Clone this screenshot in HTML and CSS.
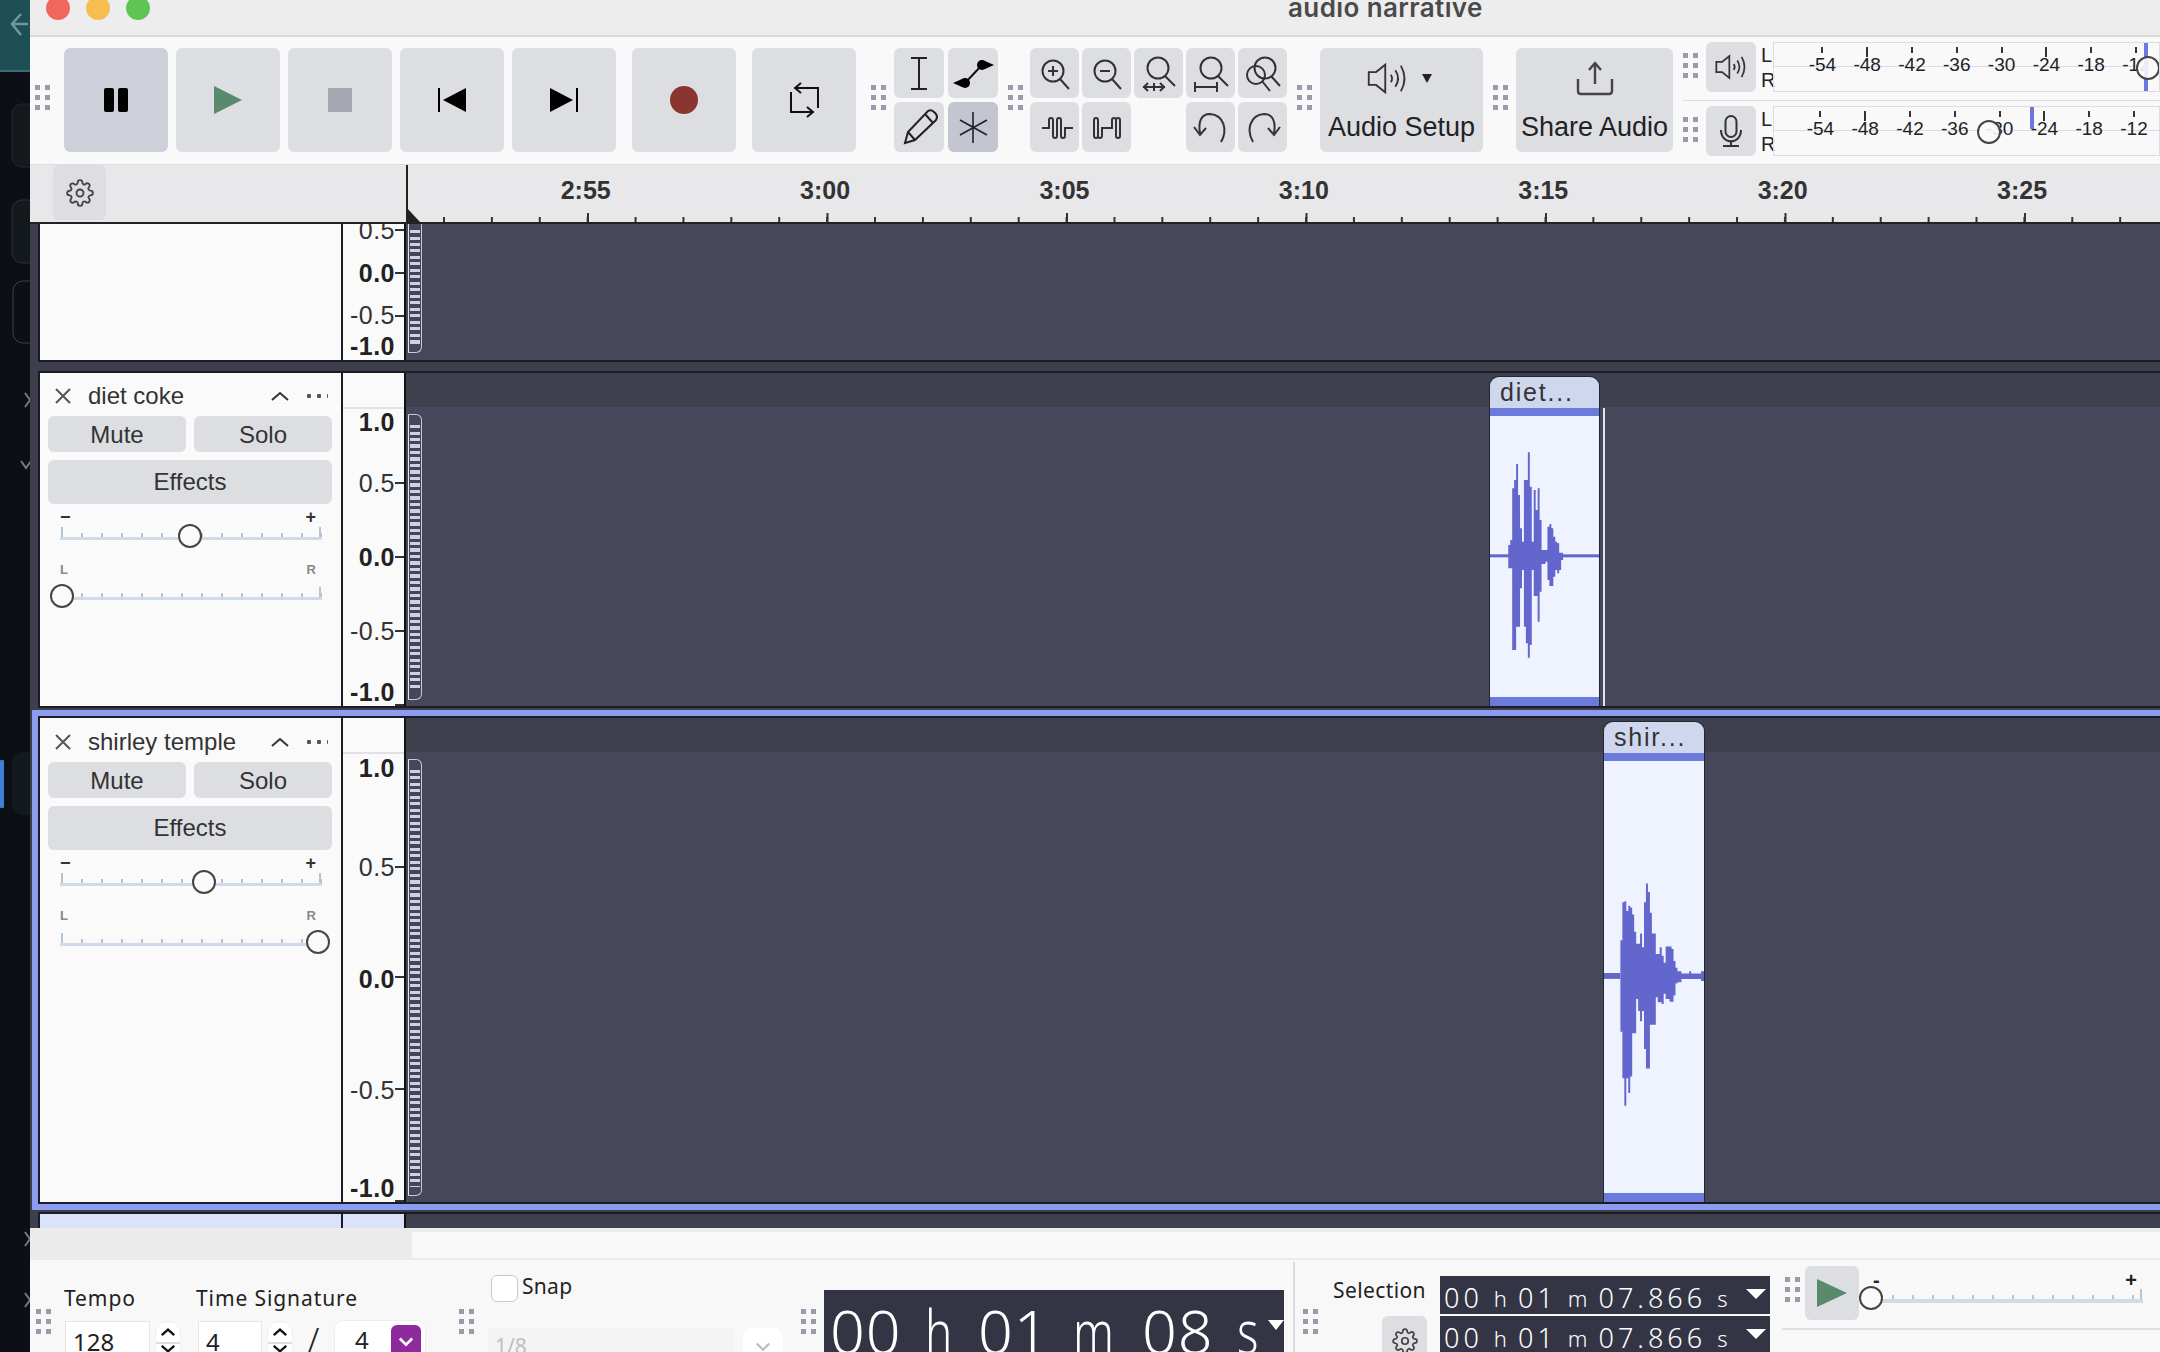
FILE: index.html
```html
<!DOCTYPE html>
<html lang="en">
  <head>
    <meta charset="UTF-8" />
    <title>audio narrative</title>
    <link rel="stylesheet" href="styles.css">
  </head>
  <body>
    <svg width="0" height="0" class="defs">
      <symbol id="gear" viewBox="0 0 24 24">
        <circle cx="12" cy="12" r="3" />
        <path d="M19.4 15a1.65 1.65 0 0 0 .33 1.82l.06.06a2 2 0 0 1 0 2.83 2 2 0 0 1-2.83 0l-.06-.06a1.65 1.65 0 0 0-1.82-.33 1.65 1.65 0 0 0-1 1.51V21a2 2 0 0 1-2 2 2 2 0 0 1-2-2v-.09A1.65 1.65 0 0 0 9 19.4a1.65 1.65 0 0 0-1.82.33l-.06.06a2 2 0 0 1-2.83 0 2 2 0 0 1 0-2.83l.06-.06a1.65 1.65 0 0 0 .33-1.82 1.65 1.65 0 0 0-1.51-1H3a2 2 0 0 1-2-2 2 2 0 0 1 2-2h.09A1.65 1.65 0 0 0 4.6 9a1.65 1.65 0 0 0-.33-1.82l-.06-.06a2 2 0 0 1 0-2.83 2 2 0 0 1 2.83 0l.06.06a1.65 1.65 0 0 0 1.82.33H9a1.65 1.65 0 0 0 1-1.51V3a2 2 0 0 1 2-2 2 2 0 0 1 2 2v.09a1.65 1.65 0 0 0 1 1.51 1.65 1.65 0 0 0 1.82-.33l.06-.06a2 2 0 0 1 2.83 0 2 2 0 0 1 0 2.83l-.06.06a1.65 1.65 0 0 0-.33 1.82V9a1.65 1.65 0 0 0 1.51 1H21a2 2 0 0 1 2 2 2 2 0 0 1-2 2h-.09a1.65 1.65 0 0 0-1.51 1z" />
      </symbol>
      <symbol id="speaker" viewBox="0 0 48 36">
        <path d="M3 11V25H11L21 33V3L11 11Z" />
        <path d="M27 14Q30 18 27 22M32 9Q38 18 32 27M38 4Q46 18 38 32" />
      </symbol>
      <symbol id="close" viewBox="0 0 18 16">
        <path d="M2 1L16 15M16 1L2 15" />
      </symbol>
      <symbol id="chevron-up" viewBox="0 0 18 10">
        <path d="M1 9L9 2L17 9" />
      </symbol>
      <symbol id="chevron-down" viewBox="0 0 18 10">
        <path d="M1 1L9 8L17 1" />
      </symbol>
    </svg>

    <!-- strip of the window behind -->
    <svg class="backdrop" width="30" height="1352" viewBox="0 0 30 1352">
      <rect width="30" height="70" fill="#1e4f55" />
      <rect y="70" width="30" height="2" fill="#3d6a70" />
      <path d="M28 24H13M21 14L12 24L21 35" fill="none" stroke="#6f9a9a" stroke-width="2.5" />
      <rect x="12" y="104" width="30" height="63" rx="10" fill="#14191e" stroke="#22282e" />
      <rect x="12" y="200" width="30" height="63" rx="10" fill="#14191e" stroke="#2c3238" />
      <rect x="13" y="281" width="30" height="62" rx="10" fill="none" stroke="#3a4046" />
      <path d="M25 393L30 400L25 407M21 461L26 468L31 461" fill="none" stroke="#777c80" stroke-width="2" />
      <rect x="12" y="752" width="30" height="63" rx="10" fill="#14191e" />
      <rect y="760" width="4" height="48" rx="1" fill="#3f7fd8" />
      <path d="M25 1232L30 1239L25 1246M25 1293L30 1300L25 1307" fill="none" stroke="#777c80" stroke-width="2" />
    </svg>

    <div class="app">
      <header class="titlebar">
        <span class="light light-red"></span>
        <span class="light light-yellow"></span>
        <span class="light light-green"></span>
        <span class="title">audio narrative</span>
      </header>

      <section class="toolbar">
        <span class="grip grip-first"></span>
        <div class="transport">
          <button class="btn btn-big btn-pressed">
            <svg width="32" height="32" viewBox="0 0 32 32"><rect x="4" y="4" width="10" height="24" rx="2" /><rect x="18" y="4" width="10" height="24" rx="2" /></svg>
          </button>
          <button class="btn btn-big">
            <svg width="32" height="32" viewBox="0 0 32 32"><path d="M2 2L30 16L2 30Z" fill="#5a8a6e" /></svg>
          </button>
          <button class="btn btn-big">
            <svg width="32" height="32" viewBox="0 0 32 32"><rect x="4" y="4" width="24" height="24" fill="#a5a8b1" /></svg>
          </button>
          <button class="btn btn-big">
            <svg width="32" height="32" viewBox="0 0 32 32"><rect x="2" y="4" width="2" height="24" /><path d="M30 4V28L7 16Z" /></svg>
          </button>
          <button class="btn btn-big">
            <svg width="32" height="32" viewBox="0 0 32 32"><path d="M2 4V28L25 16Z" /><rect x="28" y="4" width="2" height="24" /></svg>
          </button>
          <button class="btn btn-big btn-spaced">
            <svg width="32" height="32" viewBox="0 0 32 32"><circle cx="16" cy="16" r="14" fill="#8a3530" /></svg>
          </button>
          <button class="btn btn-big btn-spaced">
            <svg width="40" height="40" viewBox="0 0 40 40" fill="none" stroke="#111" stroke-width="2"><path d="M34 28V8H12M17 3L11 8L17 13M7 12V32H29M23 27L29 32L23 37" /></svg>
          </button>
        </div>

        <span class="grip grip-tools"></span>
        <div class="tools">
          <button class="btn">
            <svg width="50" height="50" viewBox="0 0 50 50" fill="none" stroke="#222" stroke-width="2"><path d="M25 10V41M17 10H33M17 41H33" /></svg>
          </button>
          <button class="btn">
            <svg width="50" height="50" viewBox="0 0 50 50"><path d="M17 35L34 17" stroke="#111" stroke-width="2" /><circle cx="17" cy="35" r="5" /><circle cx="34" cy="17" r="5" /><path d="M37 13L46 17L37 21ZM14 31L5 35L14 39Z" /></svg>
          </button>
          <button class="btn">
            <svg width="50" height="50" viewBox="0 0 50 50" fill="none" stroke="#222" stroke-width="2"><path d="M11 41L14 30L34 9Q37 7 40 10L42 12Q44 15 42 18L21 38ZM14 30L21 38M31 12L39 21" /></svg>
          </button>
          <button class="btn btn-active">
            <svg width="50" height="50" viewBox="0 0 50 50" fill="none" stroke="#222" stroke-width="1.6"><path d="M25 10V41M12 18L39 33M39 18L12 33" /></svg>
          </button>
        </div>

        <span class="grip grip-zoom"></span>
        <div class="zoom-tools">
          <button class="btn">
            <svg width="49" height="50" viewBox="0 0 49 50" fill="none" stroke="#333" stroke-width="2"><circle cx="23" cy="23" r="10.5" /><path d="M30 31L39 41M18 23H28M23 18V28" /></svg>
          </button>
          <button class="btn">
            <svg width="49" height="50" viewBox="0 0 49 50" fill="none" stroke="#333" stroke-width="2"><circle cx="23" cy="23" r="10.5" /><path d="M30 31L39 41M18 23H28" /></svg>
          </button>
          <button class="btn">
            <svg width="49" height="50" viewBox="0 0 49 50" fill="none" stroke="#333" stroke-width="2"><circle cx="24" cy="20" r="10.5" /><path d="M31 28L41 38M9 39H31M14 35L10 39L14 43M26 35L30 39L26 43M20 35V43" /></svg>
          </button>
          <button class="btn">
            <svg width="49" height="50" viewBox="0 0 49 50" fill="none" stroke="#333" stroke-width="2"><circle cx="25" cy="20" r="10.5" /><path d="M32 28L42 38M9 39H31M9 34V44M31 34V44" /></svg>
          </button>
          <button class="btn">
            <svg width="49" height="50" viewBox="0 0 49 50" fill="none" stroke="#333" stroke-width="2"><circle cx="27" cy="20" r="10.5" /><circle cx="18" cy="27" r="9" /><path d="M33 28L42 38M24 33L32 43" /></svg>
          </button>
          <button class="btn">
            <svg width="49" height="50" viewBox="0 0 49 50" fill="none" stroke="#333" stroke-width="2"><path d="M12 26H19V18a2 2 0 0 1 4 0V34a2 2 0 0 0 4 0V18a2 2 0 0 1 4 0V34a2 2 0 0 0 4 0V26H43" /></svg>
          </button>
          <button class="btn">
            <svg width="49" height="50" viewBox="0 0 49 50" fill="none" stroke="#333" stroke-width="2"><path d="M12 18a2 2 0 0 1 4 0V34a2 2 0 0 0 4 0V26H30V18a2 2 0 0 1 4 0V34a2 2 0 0 0 4 0V18a2 2 0 0 0-4 0M12 18V34a2 2 0 0 0 4 0" /></svg>
          </button>
          <span class="btn-blank"></span>
          <button class="btn">
            <svg width="49" height="50" viewBox="0 0 49 50" fill="none" stroke="#333" stroke-width="2"><path d="M35 40C42 28 38 13 24 12C15 12 12 20 14 31M8 25L14 33L20 26" /></svg>
          </button>
          <button class="btn">
            <svg width="49" height="50" viewBox="0 0 49 50" fill="none" stroke="#333" stroke-width="2"><path d="M15 40C8 28 12 13 26 12C35 12 38 20 36 31M30 26L36 33L42 25" /></svg>
          </button>
        </div>

        <span class="grip grip-zoom"></span>
        <button class="btn btn-label btn-audio">
          <span class="btn-icon">
            <svg class="icon-line" width="44" height="33"><use href="#speaker" /></svg>
            <span class="caret"></span>
          </span>
          Audio Setup
        </button>

        <span class="grip grip-zoom"></span>
        <button class="btn btn-label btn-share">
          <span class="btn-icon">
            <svg width="40" height="38" viewBox="0 0 40 38" fill="none" stroke="#444" stroke-width="2.4"><path d="M3 19V31Q3 34 6 34H34Q37 34 37 31V19M20 24V4M14 10L20 3L26 10" /></svg>
          </span>
          Share Audio
        </button>

        <div class="meters">
          <div class="meter-row">
            <span class="grip grip-meter"></span>
            <button class="btn btn-meter">
              <svg class="icon-line icon-small" width="35" height="26"><use href="#speaker" /></svg>
            </button>
            <div class="meter-lr"><span>L</span><span>R</span></div>
            <div class="meter meter-play">
              <span class="meter-tick">-54</span>
              <span class="meter-tick">-48</span>
              <span class="meter-tick">-42</span>
              <span class="meter-tick">-36</span>
              <span class="meter-tick">-30</span>
              <span class="meter-tick">-24</span>
              <span class="meter-tick">-18</span>
              <span class="meter-tick">-12</span>
              <span class="meter-peak meter-peak-full" style="left: 370px"></span>
              <span class="knob" style="left: 362px; top: 13px"></span>
            </div>
          </div>
          <hr class="meter-sep" />
          <div class="meter-row">
            <span class="grip grip-meter"></span>
            <button class="btn btn-meter">
              <svg width="24" height="32" viewBox="0 0 24 32" fill="none" stroke="#333" stroke-width="2"><rect x="6.5" y="1" width="11" height="21" rx="5.5" /><path d="M2 15C2 30 22 30 22 15M12 26V30M4 31H20" /></svg>
            </button>
            <div class="meter-lr"><span>L</span><span>R</span></div>
            <div class="meter meter-rec">
              <span class="meter-tick">-54</span>
              <span class="meter-tick">-48</span>
              <span class="meter-tick">-42</span>
              <span class="meter-tick">-36</span>
              <span class="meter-tick">-30</span>
              <span class="meter-tick">-24</span>
              <span class="meter-tick">-18</span>
              <span class="meter-tick">-12</span>
              <span class="meter-peak" style="left: 256px"></span>
              <span class="knob" style="left: 203px; top: 13px"></span>
            </div>
          </div>
        </div>
      </section>

      <section class="ruler">
        <div class="ruler-side">
          <button class="btn btn-gear"><svg class="icon-gear" width="28" height="28"><use href="#gear" /></svg></button>
        </div>
        <div class="ruler-time">
          <span class="playhead"></span>
          <div class="ruler-labels">
            <span>2:55</span><span>3:00</span><span>3:05</span><span>3:10</span><span>3:15</span><span>3:20</span><span>3:25</span>
          </div>
        </div>
      </section>

      <main class="tracks">
        <div class="track track-cut">
          <div class="track-panel"></div>
          <div class="scale">
            <span class="scale-label" style="top: 6px">0.5</span>
            <span class="scale-tick" style="top: 5px"></span>
            <span class="scale-label scale-bold" style="top: 49px">0.0</span>
            <span class="scale-tick" style="top: 48px"></span>
            <span class="scale-label" style="top: 91px">-0.5</span>
            <span class="scale-tick" style="top: 91px"></span>
            <span class="scale-label scale-bold" style="top: 122px">-1.0</span>
          </div>
          <div class="lane">
            <span class="handle handle-cut"></span>
          </div>
        </div>

        <div class="track track-diet">
          <div class="track-panel">
            <div class="track-name">
              <svg class="icon-line icon-close" width="18" height="16"><use href="#close" /></svg>
              <span class="track-title">diet coke</span>
              <svg class="icon-line icon-collapse" width="18" height="10"><use href="#chevron-up" /></svg>
              <span class="track-dots"></span>
            </div>
            <div class="track-btns">
              <button class="btn btn-track">Mute</button>
              <button class="btn btn-track">Solo</button>
            </div>
            <button class="btn btn-effects">Effects</button>
            <div class="slider-labels"><span>−</span><span>+</span></div>
            <div class="slider"><span class="knob" style="left: 118px"></span></div>
            <div class="slider-labels slider-labels-pan"><span>L</span><span>R</span></div>
            <div class="slider slider-pan"><span class="knob" style="left: -10px"></span></div>
          </div>
          <div class="scale scale-head">
            <span class="scale-label scale-bold" style="top: 49px">1.0</span>
            <span class="scale-label" style="top: 110px">0.5</span>
            <span class="scale-tick" style="top: 109px"></span>
            <span class="scale-label scale-bold" style="top: 184px">0.0</span>
            <span class="scale-tick" style="top: 183px"></span>
            <span class="scale-label" style="top: 258px">-0.5</span>
            <span class="scale-tick" style="top: 257px"></span>
            <span class="scale-label scale-bold" style="top: 319px">-1.0</span>
            <span class="scale-tick" style="top: 331px"></span>
          </div>
          <div class="lane">
            <div class="lane-head"></div>
            <span class="handle handle-diet"></span>
            <div class="clip clip-diet">
              <div class="clip-name">diet...</div>
              <div class="clip-band"></div>
              <div class="clip-body">
                <svg class="wave" viewBox="148 168 334 843" preserveAspectRatio="none">
                  <rect x="148" y="583" width="344" height="9" />
                  <path d="M204 588V555H210V540H216V385H222V360H228V312H234V405H240V505H246V545H252V360H264V277H270V380H276V545H282V390H288V450H294V385H300V480H306V570H324V500H330V492H336V505H342V530H348V545H354V550H360V578H372V600H366V630H360V640H354V630H348V650H342V678H330V660H324V605H318V612H306V695H300V785H294V708H282V630H276V855H270V893H264V850H258V800H252V630H246V685H240V800H228V870H216V625H204Z" />
                </svg>
              </div>
              <div class="clip-band clip-band-end"></div>
            </div>
            <span class="clip-edge"></span>
          </div>
        </div>

        <div class="selected">
          <div class="track track-shirley">
            <div class="track-panel">
              <div class="track-name">
                <svg class="icon-line icon-close" width="18" height="16"><use href="#close" /></svg>
                <span class="track-title">shirley temple</span>
                <svg class="icon-line icon-collapse" width="18" height="10"><use href="#chevron-up" /></svg>
                <span class="track-dots"></span>
              </div>
              <div class="track-btns">
                <button class="btn btn-track">Mute</button>
                <button class="btn btn-track">Solo</button>
              </div>
              <button class="btn btn-effects">Effects</button>
              <div class="slider-labels"><span>−</span><span>+</span></div>
              <div class="slider"><span class="knob" style="left: 132px"></span></div>
              <div class="slider-labels slider-labels-pan"><span>L</span><span>R</span></div>
              <div class="slider slider-pan"><span class="knob" style="left: 246px"></span></div>
            </div>
            <div class="scale scale-head">
              <span class="scale-label scale-bold" style="top: 50px">1.0</span>
              <span class="scale-label" style="top: 149px">0.5</span>
              <span class="scale-tick" style="top: 148px"></span>
              <span class="scale-label scale-bold" style="top: 261px">0.0</span>
              <span class="scale-tick" style="top: 258px"></span>
              <span class="scale-label" style="top: 372px">-0.5</span>
              <span class="scale-tick" style="top: 370px"></span>
              <span class="scale-label scale-bold" style="top: 470px">-1.0</span>
              <span class="scale-tick" style="top: 482px"></span>
            </div>
            <div class="lane">
              <div class="lane-head"></div>
              <span class="handle handle-shirley"></span>
              <div class="clip clip-shirley">
                <div class="clip-name">shir...</div>
                <div class="clip-band"></div>
                <div class="clip-body">
                  <svg class="wave" viewBox="130 180 305 1253" preserveAspectRatio="none">
                    <rect x="130" y="795" width="50" height="17" />
                    <path d="M180 804V700H186V590H192V587H198V615H204V600H210V605H216V625H222V675H228V710H240V680H246V720H252V590H258V535H264V560H270V620H276V680H288V740H300V720H306V745H312V765H318V718H336V725H342V760H348V780H354V790H366V796H390V790H396V796H426V790H435V818H426V812H366V822H354V825H348V860H342V878H330V870H318V855H312V885H306V880H294V865H288V945H270V1072H258V1015H252V905H246V935H240V905H234V870H228V970H216V1095H210V1143H204V1100H198V1180H192V1100H186V965H180Z" />
                  </svg>
                </div>
                <div class="clip-band clip-band-end"></div>
              </div>
            </div>
          </div>
        </div>

        <div class="track track-next">
          <div class="track-panel"></div>
          <div class="scale"></div>
          <div class="lane"></div>
        </div>
      </main>

      <div class="hscroll"><div class="hscroll-track"></div></div>

      <footer class="bottom">
        <span class="grip grip-tempo"></span>
        <div class="tempo">
          <label class="field-label">Tempo</label>
          <div class="stepper">
            <span class="num-box num-tempo">128</span>
            <span class="spin">
              <svg class="icon-bold" width="14" height="8"><use href="#chevron-up" /></svg>
              <svg class="icon-bold" width="14" height="8"><use href="#chevron-down" /></svg>
            </span>
          </div>
        </div>
        <div class="timesig">
          <label class="field-label">Time Signature</label>
          <div class="stepper">
            <span class="num-box num-sig">4</span>
            <span class="spin">
              <svg class="icon-bold" width="14" height="8"><use href="#chevron-up" /></svg>
              <svg class="icon-bold" width="14" height="8"><use href="#chevron-down" /></svg>
            </span>
            <span class="slash">/</span>
            <span class="combo">
              <span class="combo-value">4</span>
              <span class="combo-btn">
                <svg width="16" height="10" viewBox="0 0 18 10" fill="none" stroke="#fff" stroke-width="3"><path d="M2 1L9 8L16 1" /></svg>
              </span>
            </span>
          </div>
        </div>

        <span class="grip grip-snap"></span>
        <div class="snap">
          <div class="snap-check"><span class="checkbox"></span><span class="snap-label">Snap</span></div>
          <div class="snap-row">
            <span class="snap-select">1/8</span>
            <span class="snap-btn">
              <svg width="16" height="10" viewBox="0 0 18 10" fill="none" stroke="#bbb" stroke-width="2.5"><path d="M2 1L9 8L16 1" /></svg>
            </span>
          </div>
        </div>

        <span class="grip grip-timer"></span>
        <div class="timer">
          <span class="timer-digits">00</span><span class="timer-unit timer-h">h</span>
          <span class="timer-digits">01</span><span class="timer-unit timer-m">m</span>
          <span class="timer-digits">08</span><span class="timer-unit timer-s">s</span>
          <span class="caret caret-white caret-timer"></span>
        </div>
        <span class="bottom-divider"></span>

        <span class="grip grip-selection"></span>
        <div class="selection">
          <span class="selection-label">Selection</span>
          <button class="btn btn-gear btn-gear-small"><svg class="icon-gear" width="26" height="26"><use href="#gear" /></svg></button>
        </div>
        <div class="sel-times">
          <div class="sel-time">
            <span>00</span><span class="sel-unit">h</span><span>01</span><span class="sel-unit">m</span><span>07.866</span><span class="sel-unit">s</span>
            <span class="caret caret-white caret-sel"></span>
          </div>
          <div class="sel-time">
            <span>00</span><span class="sel-unit">h</span><span>01</span><span class="sel-unit">m</span><span>07.866</span><span class="sel-unit">s</span>
            <span class="caret caret-white caret-sel"></span>
          </div>
        </div>

        <div class="playback">
          <span class="grip grip-play"></span>
          <button class="btn btn-play">
            <svg width="30" height="28" viewBox="0 0 30 28"><path d="M0 0L30 14L0 28Z" fill="#5a8a6e" /></svg>
          </button>
          <div class="play-speed">
            <div class="play-speed-labels"><span>-</span><span>+</span></div>
            <div class="slider slider-speed"><span class="knob" style="left: -12px"></span></div>
          </div>
        </div>
      </footer>
    </div>
  </body>
</html>
```

FILE: styles.css
```css
* {
  box-sizing: border-box;
}

html,
body {
  margin: 0;
  height: 1352px;
  overflow: hidden;
}

body {
  display: flex;
  background-color: #0c1016;
  font-family: "Liberation Sans", Arial, sans-serif;
  color: #222;
}

button {
  font: inherit;
  color: inherit;
  border: none;
  padding: 0;
}

.defs {
  position: absolute;
}

.backdrop {
  flex: none;
}

.app {
  flex: 1;
  min-width: 0;
  display: flex;
  flex-direction: column;
}

/* title bar */
.titlebar {
  height: 37px;
  flex: none;
  display: flex;
  gap: 16px;
  padding-left: 16px;
  background-color: #ededed;
  border-bottom: 2px solid #d9d9d9;
  overflow: hidden;
}

.light {
  width: 24px;
  height: 24px;
  margin-top: -4px;
  border-radius: 50%;
}

.light-red {
  background-color: #f1675c;
}

.light-yellow {
  background-color: #f6bd4f;
}

.light-green {
  background-color: #5fc454;
}

.title {
  margin: -7px 0 0 1122px;
  font-family: Inter, sans-serif;
  font-size: 26px;
  font-weight: 600;
  line-height: 30px;
  letter-spacing: 0.4px;
  color: #4a4a4a;
}

/* toolbar */
.toolbar {
  height: 128px;
  flex: none;
  display: flex;
  align-items: flex-start;
  padding-top: 11px;
  background-color: #f9f9f9;
  border-bottom: 1px solid #dcdce2;
  overflow: hidden;
}

.grip {
  flex: none;
  width: 15px;
  height: 25px;
  background: conic-gradient(#9a9aaa 25%, transparent 0) -5px 0 / 10px 10px;
}

.grip-first {
  margin: 37px 0 0 5px;
}

.grip-tools {
  margin: 37px 8px 0 15px;
}

.grip-zoom {
  margin: 37px 8px 0 10px;
}

.btn {
  display: flex;
  align-items: center;
  justify-content: center;
  background-color: #dddee2;
  border-radius: 6px;
}

.btn-pressed {
  background-color: #cdd0d8;
}

.btn-active {
  background-color: #c3c5d0;
}

.transport {
  display: flex;
  gap: 8px;
  margin: 0 0 0 14px;
}

.btn-big {
  width: 104px;
  height: 104px;
}

.btn-spaced {
  margin-left: 8px;
}

.tools {
  display: grid;
  grid-template-columns: 50px 50px;
  grid-auto-rows: 50px;
  gap: 4px;
}

.zoom-tools {
  display: grid;
  grid-template-columns: repeat(5, 49px);
  grid-auto-rows: 50px;
  gap: 4px 3px;
  margin-left: -1px;
}

.btn-label {
  flex-direction: column;
  height: 104px;
  font-size: 27px;
  color: #222;
}

.btn-icon {
  height: 54px;
  padding-bottom: 12px;
  display: flex;
  align-items: center;
  gap: 12px;
}

.btn-audio {
  width: 163px;
}

.btn-audio .btn-icon {
  margin-right: 6px;
}

.btn-share {
  width: 157px;
}

.icon-line {
  fill: none;
  stroke: #333;
  stroke-width: 2;
}

.icon-small {
  stroke-width: 2.4;
}

.caret {
  width: 0;
  height: 0;
  border-left: 5px solid transparent;
  border-right: 5px solid transparent;
  border-top: 9px solid #222;
}

/* level meters */
.meters {
  width: 477px;
  flex: none;
  margin: -6px 0 0 10px;
}

.meter-row {
  display: flex;
  height: 50px;
}

.grip-meter {
  margin: 11px 8px 0 0;
}

.btn-meter {
  width: 50px;
  height: 50px;
  flex: none;
}

.meter-sep {
  height: 1px;
  margin: 8px 0 5px;
  border: none;
  background-color: #dcdce2;
}

.meter-lr {
  width: 17px;
  flex: none;
  display: flex;
  flex-direction: column;
  justify-content: space-around;
  padding-left: 5px;
  font-size: 20px;
  line-height: 24px;
  color: #222;
}

.meter {
  position: relative;
  flex: 1;
  height: 50px;
  display: flex;
  padding-top: 4px;
  border: 1px solid #dcdce2;
  background: linear-gradient(#dcdce2, #dcdce2) 0 23px / 100% 1px no-repeat;
  overflow: hidden;
}

.meter-play {
  padding-left: 26px;
}

.meter-rec {
  padding-left: 24px;
}

.meter-tick {
  flex: none;
  width: 44.8px;
  display: flex;
  flex-direction: column;
  align-items: center;
  font-size: 19px;
  line-height: 19px;
  color: #222;
}

.meter-tick::before {
  content: "";
  width: 2px;
  height: 6px;
  margin-bottom: 2px;
  background-color: #333;
}

.meter-tick:nth-child(4n + 2)::before {
  height: 10px;
  margin-bottom: -2px;
}

.meter-peak {
  position: absolute;
  top: 0;
  width: 4px;
  height: 22px;
  background-color: #6a78e0;
}

.meter-peak-full {
  height: 100%;
}

.knob {
  position: absolute;
  z-index: 1;
  top: -10px;
  width: 24px;
  height: 24px;
  border: 2.5px solid #444;
  border-radius: 50%;
  background-color: rgba(250, 250, 250, 0.9);
}

/* time ruler */
.ruler {
  height: 59px;
  flex: none;
  display: flex;
  background-color: #e8e8ea;
  border-bottom: 2px solid #222;
}

.ruler-side {
  width: 376px;
  flex: none;
  padding-left: 23px;
}

.btn-gear {
  width: 53px;
  height: 55px;
}

.icon-gear {
  fill: none;
  stroke: #444;
  stroke-width: 1.6;
}

.ruler-time {
  position: relative;
  flex: 1;
  border-left: 2px solid #222;
  background-image:
    linear-gradient(90deg, #333 2px, transparent 2px),
    linear-gradient(90deg, #333 2px, transparent 2px);
  background-repeat: repeat-x;
  background-size: 47.9px 5px, 239.5px 9px;
  background-position: 35px 100%, 179px 100%;
}

.playhead {
  position: absolute;
  left: -2px;
  bottom: 0;
  width: 14px;
  height: 15px;
  background-color: #222;
  clip-path: polygon(0 0, 100% 100%, 0 100%);
}

.ruler-labels {
  display: flex;
  padding: 11px 0 0 58px;
  font-size: 25px;
  font-weight: bold;
  line-height: 28px;
  color: #333;
}

.ruler-labels span {
  flex: none;
  width: 239.4px;
  text-align: center;
}

/* tracks */
.tracks {
  height: 1004px;
  flex: none;
  background-color: #3e3f4d;
  overflow: hidden;
}

.track {
  display: flex;
  margin-left: 8px;
  border: 2px solid #1c1c24;
  border-right: none;
}

.track-cut {
  height: 138px;
  border-top: none;
  margin-bottom: 9px;
}

.track-diet {
  height: 337px;
  margin-bottom: 2px;
}

.selected {
  margin: 0 0 2px 2px;
  border: 6px solid #8c9cf0;
  border-right: none;
}

.track-shirley {
  height: 488px;
  margin-left: 0;
}

.track-panel {
  width: 303px;
  flex: none;
  padding: 8px 9px 0 8px;
  background-color: #fafafa;
  border-right: 2px solid #1c1c24;
}

.track-name {
  height: 30px;
  display: flex;
  align-items: center;
  margin-bottom: 5px;
  padding-left: 6px;
}

.track-shirley .track-name {
  margin-top: 1px;
}

.icon-close {
  margin-right: 16px;
  stroke: #555;
}

.track-title {
  flex: 1;
  font-size: 24px;
  color: #333;
}

.icon-collapse {
  margin-right: 15px;
}

.track-dots {
  width: 24px;
  height: 4px;
  margin-right: 4px;
  background: radial-gradient(circle, #555 2px, transparent 2.5px) 0 0 / 10px 4px;
}

.track-btns {
  display: flex;
  gap: 8px;
}

.btn-track {
  width: 138px;
  height: 36px;
  padding-top: 2px;
  font-size: 24px;
  color: #333;
}

.btn-effects {
  width: 284px;
  height: 44px;
  margin-top: 8px;
  font-size: 24px;
  color: #333;
}

.slider-labels {
  display: flex;
  justify-content: space-between;
  height: 14px;
  margin: 6px 16px 0 12px;
  font-size: 18px;
  font-weight: bold;
  line-height: 14px;
  color: #333;
}

.slider-labels-pan {
  margin-top: 23px;
  font-size: 13px;
  color: #888;
}

.slider {
  position: relative;
  height: 16px;
  margin: 0 10px 0 12px;
  border-bottom: 3px solid #cfdbe8;
  background: linear-gradient(90deg, #b4c4d4 2px, transparent 2px) 1px 100% / 20px 4px repeat-x;
}

.slider::before,
.slider::after {
  content: "";
  position: absolute;
  bottom: 0;
  width: 2px;
  height: 10px;
  background-color: #b4c4d4;
}

.slider::before {
  left: 1px;
}

.slider::after {
  right: 1px;
}

.slider .knob {
  top: auto;
  bottom: -11px;
  background-color: #fafafa;
}

.slider-pan {
  margin-top: 7px;
}

.scale {
  position: relative;
  width: 63px;
  flex: none;
  background-color: #fafafa;
  border-right: 2px solid #111;
  overflow: hidden;
}

.scale-head {
  background: linear-gradient(#e2e2e6, #e2e2e6) 0 34px / 100% 2px no-repeat #fafafa;
}

.scale-label {
  position: absolute;
  right: 9px;
  font-size: 25px;
  line-height: 26px;
  letter-spacing: 0.5px;
  color: #333;
  transform: translateY(-50%);
}

.scale-bold {
  font-weight: bold;
  color: #222;
}

.scale-tick {
  position: absolute;
  right: 0;
  width: 9px;
  height: 2px;
  background-color: #333;
}

.lane {
  position: relative;
  flex: 1;
  background-color: #46475a;
}

.lane-head {
  height: 34px;
  background-color: #3f404e;
}

.handle {
  position: absolute;
  left: 2px;
  width: 14px;
  border: 1.5px solid #c9cad6;
  border-left-color: #e4e4ec;
  border-radius: 0 6px 6px 0;
}

.handle::before {
  content: "";
  position: absolute;
  top: 10px;
  bottom: 8px;
  left: 1px;
  right: 1px;
  background: repeating-linear-gradient(#d0d1de 0 3px, #44455c 3px 6.5px);
}

.handle-cut {
  top: -4px;
  height: 133px;
  border-top: none;
  border-radius: 0 0 6px 0;
}

.handle-diet {
  top: 41px;
  height: 286px;
}

.handle-shirley {
  top: 41px;
  height: 437px;
}

.clip {
  position: absolute;
  top: 3px;
  display: flex;
  flex-direction: column;
  border: 1.5px solid #26262f;
  border-bottom: none;
  border-radius: 10px 10px 0 0;
  overflow: hidden;
}

.clip-diet {
  left: 1083px;
  width: 111px;
  height: 330px;
}

.clip-shirley {
  left: 1197px;
  width: 102px;
  height: 481px;
}

.clip-name {
  height: 31px;
  flex: none;
  padding: 2px 0 0 10px;
  font-size: 25px;
  line-height: 26px;
  letter-spacing: 1.8px;
  color: #333;
  background-color: #cfd7ee;
}

.clip-band {
  height: 8px;
  flex: none;
  background-color: #6b7bdb;
}

.clip-band-end {
  height: 9px;
}

.clip-body {
  flex: 1;
  min-height: 0;
  background-color: #eff2ff;
}

.wave {
  display: block;
  width: 100%;
  height: 100%;
  fill: #6366cc;
  overflow: visible;
}

.clip-edge {
  position: absolute;
  left: 1197px;
  top: 35px;
  width: 2px;
  height: 298px;
  background-color: #e4e4ea;
}

.track-next {
  margin-left: 8px;
}

.track-next .track-panel,
.track-next .scale {
  height: 40px;
  background: #dbe3fb;
}

.track-next .lane {
  background-color: #3f404e;
}

/* horizontal scroll bar */
.hscroll {
  height: 32px;
  flex: none;
  padding: 4px 0 2px 382px;
  background-color: #ebebeb;
}

.hscroll-track {
  height: 100%;
  background-color: #f9f9f9;
}

/* bottom bar */
.bottom {
  flex: 1;
  min-height: 0;
  display: flex;
  align-items: flex-start;
  background-color: #f8f8f8;
  font-family: "Noto Sans", sans-serif;
  overflow: hidden;
}

.grip-tempo {
  margin: 49px 13px 0 6px;
}

.grip-snap {
  margin: 49px 14px 0 0;
}

.field-label {
  display: block;
  height: 26px;
  margin-top: 25px;
  font-size: 21px;
  line-height: 26px;
  letter-spacing: 0.9px;
  color: #222;
}

.tempo {
  width: 132px;
  flex: none;
}

.timesig {
  width: 263px;
  flex: none;
}

.stepper {
  display: flex;
  align-items: flex-start;
  margin-top: 10px;
}

.num-box {
  height: 50px;
  background-color: #fff;
  border: 1px solid #e6e6e6;
  font-size: 24px;
  line-height: 30px;
  padding: 5px 0 0 7px;
  color: #222;
}

.num-tempo {
  width: 85px;
  margin-left: 1px;
}

.num-sig {
  width: 64px;
  margin-left: 2px;
}

.spin {
  width: 26px;
  height: 50px;
  margin-left: 5px;
  padding-top: 6px;
  display: flex;
  flex-direction: column;
  align-items: center;
  gap: 9px;
  background: linear-gradient(#ddd, #ddd) 0 20px / 100% 2px no-repeat #fff;
  border-radius: 12px 12px 0 0;
  border: 1px solid #eee;
}

.icon-bold {
  flex: none;
  fill: none;
  stroke: #111;
  stroke-width: 3;
}

.slash {
  width: 41px;
  font-size: 34px;
  line-height: 38px;
  text-align: center;
  color: #222;
  font-weight: 300;
  flex: none;
}

.combo {
  position: relative;
  width: 92px;
  height: 50px;
  margin-top: -1px;
  background-color: #fff;
  border: 1px solid #eee;
  border-radius: 10px 10px 0 0;
  font-size: 24px;
  line-height: 38px;
  padding-left: 20px;
}

.combo-btn {
  position: absolute;
  left: 56px;
  top: 4px;
  width: 30px;
  height: 40px;
  padding-top: 12px;
  display: flex;
  justify-content: center;
  background-color: #8e2a9c;
  border-radius: 6px;
}

.snap {
  width: 295px;
  flex: none;
}

.snap-check {
  display: flex;
  gap: 4px;
  margin: 15px 0 0 3px;
}

.checkbox {
  width: 27px;
  height: 27px;
  border: 1.5px solid #c8c8c8;
  border-radius: 6px;
  background-color: #fff;
}

.snap-label {
  font-size: 21px;
  line-height: 22px;
  letter-spacing: 0.3px;
  color: #222;
}

.snap-row {
  display: flex;
  gap: 8px;
  margin-top: 26px;
}

.snap-select {
  width: 247px;
  height: 50px;
  padding: 4px 0 0 7px;
  font-size: 21px;
  color: #c0c0c0;
  background-color: #f4f4f4;
}

.snap-btn {
  width: 40px;
  height: 50px;
  padding-top: 14px;
  display: flex;
  justify-content: center;
  background-color: #fff;
  border-radius: 10px 10px 0 0;
}

.grip-timer {
  margin: 49px 8px 0 18px;
}

.timer {
  position: relative;
  width: 460px;
  height: 70px;
  flex: none;
  margin-top: 30px;
  display: flex;
  gap: 25px;
  padding-left: 6px;
  background-color: #333544;
  color: #fff;
  font-size: 61px;
  font-weight: 300;
  line-height: 82px;
  letter-spacing: 1px;
}

.timer-digits {
  flex: none;
  width: 70px;
}

.timer-unit {
  flex: none;
  transform: scaleX(0.75);
  transform-origin: left;
}

.timer-h {
  width: 28px;
}

.timer-m {
  width: 44px;
}

.timer-s {
  width: 24px;
}

.caret-white {
  border-top-color: #fff;
}

.caret-timer {
  position: absolute;
  right: 0;
  top: 30px;
  border-left-width: 8px;
  border-right-width: 8px;
  border-top-width: 10px;
}

.bottom-divider {
  width: 2px;
  height: 92px;
  flex: none;
  margin: 2px 8px 0 9px;
  background-color: #dcdcdc;
}

.grip-selection {
  margin: 49px 15px 0 0;
}

.selection {
  width: 107px;
  flex: none;
  display: flex;
  flex-direction: column;
  align-items: flex-end;
}

.selection-label {
  width: 107px;
  margin-top: 17px;
  font-size: 21px;
  line-height: 26px;
  letter-spacing: 0.4px;
  color: #222;
}

.btn-gear-small {
  width: 45px;
  height: 50px;
  margin: 13px 13px 0 0;
}

.sel-times {
  width: 330px;
  flex: none;
  margin-top: 16px;
}

.sel-time {
  position: relative;
  height: 38px;
  margin-bottom: 2px;
  display: flex;
  gap: 11px;
  padding-left: 4px;
  background-color: #333544;
  color: #fff;
  font-size: 27px;
  font-weight: 300;
  line-height: 44px;
  letter-spacing: 4px;
  overflow: hidden;
}

.sel-unit {
  letter-spacing: 0;
  font-size: 22px;
}

.caret-sel {
  position: absolute;
  right: 4px;
  top: 13px;
  border-left-width: 10px;
  border-right-width: 10px;
  border-top-width: 10px;
}

.playback {
  flex: 1;
  min-width: 0;
  display: flex;
  align-items: flex-start;
  height: 64px;
  margin: 6px 0 0 12px;
  padding-top: 0;
  border-bottom: 2px solid #e0e0e0;
}

.grip-play {
  margin: 11px 5px 0 3px;
}

.btn-play {
  width: 54px;
  height: 54px;
  flex: none;
}

.play-speed {
  width: 272px;
  margin-left: 12px;
}

.play-speed-labels {
  display: flex;
  justify-content: space-between;
  height: 16px;
  margin-top: 6px;
  padding: 0 6px 0 2px;
  font-family: "Liberation Sans", sans-serif;
  font-size: 20px;
  font-weight: bold;
  line-height: 16px;
  color: #222;
}

.slider-speed {
  height: 15px;
  margin: 0;
  border-bottom-width: 4px;
}

.slider-speed .knob {
  bottom: -11px;
}
```
